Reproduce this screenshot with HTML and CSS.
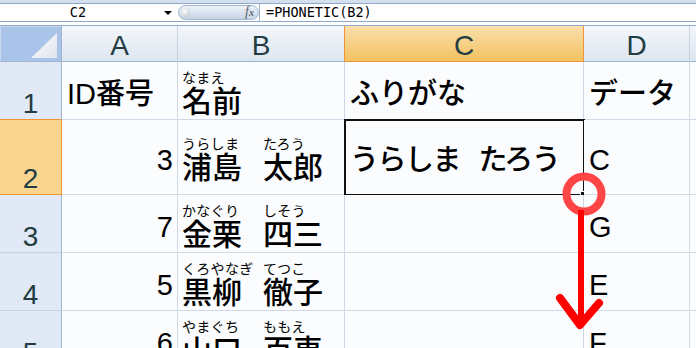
FILE: index.html
```html
<!DOCTYPE html>
<html lang="ja">
<head>
  <meta charset="UTF-8" />
  <title>PHONETIC</title>
  <link rel="stylesheet" href="styles.css">
</head>
<body>
  <div class="ribbon"></div>
  <div class="fbar">
    <div class="namebox"><span class="ref">C2</span><span class="drop"></span></div>
    <div class="fxpill"><span class="knob"></span><span class="fx"><i>f</i><small>x</small></span></div>
    <div class="formula">=PHONETIC(B2)</div>
  </div>
  <div class="gap"></div>

  <div class="sheet">
    <div class="corner"></div>
    <div class="ch">A</div>
    <div class="ch pre">B</div>
    <div class="ch on">C</div>
    <div class="ch">D</div>
    <div class="ch"></div>

    <div class="rh pre">1</div>
    <div class="c">ID番号</div>
    <div class="c name">
      <span class="word"><span class="kana">なまえ</span><span class="kanji">名前</span></span>
    </div>
    <div class="c">ふりがな</div>
    <div class="c">データ</div>
    <div class="c"></div>

    <div class="rh on">2</div>
    <div class="c num r2">3</div>
    <div class="c name r2">
      <span class="word"><span class="kana">うらしま</span><span class="kanji">浦島</span></span>
      <span class="word"><span class="kana">たろう</span><span class="kanji">太郎</span></span>
    </div>
    <div class="c r2 active"><span class="yomi">うらしま たろう</span><span class="sel"></span><span class="handle"></span></div>
    <div class="c r2">C</div>
    <div class="c"></div>

    <div class="rh">3</div>
    <div class="c num">7</div>
    <div class="c name">
      <span class="word"><span class="kana">かなぐり</span><span class="kanji">金栗</span></span>
      <span class="word"><span class="kana">しそう</span><span class="kanji">四三</span></span>
    </div>
    <div class="c"></div>
    <div class="c">G</div>
    <div class="c"></div>

    <div class="rh">4</div>
    <div class="c num">5</div>
    <div class="c name">
      <span class="word"><span class="kana">くろやなぎ</span><span class="kanji">黒柳</span></span>
      <span class="word"><span class="kana">てつこ</span><span class="kanji">徹子</span></span>
    </div>
    <div class="c"></div>
    <div class="c">E</div>
    <div class="c"></div>

    <div class="rh">5</div>
    <div class="c num">6</div>
    <div class="c name">
      <span class="word"><span class="kana">やまぐち</span><span class="kanji">山口</span></span>
      <span class="word"><span class="kana">ももえ</span><span class="kanji">百恵</span></span>
    </div>
    <div class="c"></div>
    <div class="c">F</div>
    <div class="c"></div>
  </div>

  <svg class="marks" width="696" height="348" viewBox="0 0 696 348">
    <circle cx="584" cy="194" r="17.5" fill="none" stroke="#ff4646" stroke-width="8" />
    <path d="M581 210 V324" stroke="#ff0000" stroke-width="6" />
    <path d="M560 298 L580 325 L599 303" fill="none" stroke="#ff0000" stroke-width="8" stroke-linecap="round" stroke-linejoin="round" />
  </svg>
</body>
</html>
```

FILE: styles.css
```css
body {
  margin: 0;
  width: 696px;
  height: 348px;
  overflow: hidden;
  position: relative;
  background: #fff;
  font-family: "Liberation Sans", "Noto Sans CJK JP", sans-serif;
}
.ribbon {
  height: 3px;
  background: #d3dfef;
  border-bottom: 1px solid #8ea9c9;
}
.fbar {
  display: flex;
  height: 17px;
  border-bottom: 1px solid #8ea9c9;
  background: #fff;
  font-family: "DejaVu Sans Mono", monospace;
  font-size: 13.5px;
  line-height: 17px;
}
.namebox {
  width: 178px;
  display: flex;
  align-items: center;
}
.ref {
  width: 156px;
  text-align: center;
}
.drop {
  margin-left: 8px;
  width: 0;
  height: 0;
  border-left: 4px solid transparent;
  border-right: 4px solid transparent;
  border-top: 4px solid #000;
}
.fxpill {
  width: 73px;
  margin: 1px 0;
  border: 1px solid #a3b7d0;
  border-radius: 8px;
  background: linear-gradient(#eef3f9, #c6d4e6);
  display: flex;
  align-items: center;
  justify-content: space-between;
  padding: 0 4px 0 2px;
}
.knob {
  width: 9px;
  height: 9px;
  border-radius: 50%;
  background: radial-gradient(circle at 40% 35%, #fff, #b3bfcc);
}
.fx {
  font-family: "Liberation Serif", serif;
  color: #5f6670;
  font-size: 14px;
  line-height: 14px;
}
.fx small {
  font-size: 10px;
  font-style: italic;
  font-weight: bold;
}
.formula {
  flex: 1;
  border-left: 1px solid #9fb3cb;
  padding-left: 6px;
}
.gap {
  height: 3px;
  border-bottom: 1px solid #8ea9c9;
}

.sheet {
  display: grid;
  grid-template-columns: 62px 116px 167px 239px 106px 1fr;
  grid-template-rows: 36px 58px 75px 58px 58px 58px;
}
.sheet > div {
  box-sizing: border-box;
}
.corner {
  position: relative;
  background: #aac4e9;
  border-right: 1px solid #9eb6ce;
  border-bottom: 1px solid #9eb6ce;
  box-shadow: inset 1px 1px 0 #c9d8ee;
}
.corner::after {
  content: "";
  position: absolute;
  right: 4px;
  bottom: 3px;
  width: 26px;
  height: 25px;
  clip-path: polygon(100% 0, 100% 100%, 0 100%);
  background: linear-gradient(135deg, #ffffff, #dfe4ea);
}
.ch, .rh {
  display: flex;
  justify-content: center;
  align-items: flex-end;
  font-size: 28px;
  line-height: 1;
  color: #223d42;
}
.ch {
  background: linear-gradient(#f4f7fb, #dce5f0);
  border-right: 1px solid #c6d3e3;
  border-bottom: 1px solid #9eb6ce;
  padding-bottom: 1px;
}
.ch.pre {
  border-right-color: #f29536;
}
.ch.on {
  background: linear-gradient(#fae0ad, #f2c15f);
  border-right-color: #f29536;
  border-bottom-color: #f29536;
}
.rh {
  background: #e0e9f5;
  border-right: 1px solid #9eb6ce;
  border-bottom: 1px solid #c2d1e3;
  padding-bottom: 1px;
}
.rh.pre {
  border-bottom-color: #f29536;
}
.rh.on {
  background: #f9d590;
  border-right-color: #f29536;
  border-bottom-color: #f29536;
}

.c {
  position: relative;
  display: flex;
  align-items: flex-end;
  padding: 0 4px 10px 5px;
  background: #fbfcfe;
  border-right: 1px solid #d0d7e5;
  border-bottom: 1px solid #d0d7e5;
  font-size: 29px;
  font-weight: 500;
  line-height: 1;
  color: #000;
  white-space: nowrap;
}
.c.r2 {
  padding-bottom: 19px;
}
.c.num {
  justify-content: flex-end;
}
.c.name {
  padding: 0 0 1px 4px;
}
.c.name.r2 {
  padding-bottom: 10px;
}
.yomi {
  letter-spacing: -1.5px;
  word-spacing: 12px;
}
.word {
  display: flex;
  flex-direction: column;
  width: 83px;
}
.kana {
  font-size: 14px;
  font-weight: 400;
  line-height: 16px;
  letter-spacing: 0.3px;
}
.kanji {
  font-size: 30px;
  line-height: 32px;
}

.sel {
  position: absolute;
  left: -1px;
  top: -1px;
  right: -2px;
  bottom: -2px;
  border: 2px solid #111;
}
.handle {
  position: absolute;
  right: -4px;
  bottom: -4px;
  width: 5px;
  height: 5px;
  background: #111;
  border: 1px solid #fff;
}

.marks {
  position: absolute;
  left: 0;
  top: 0;
  pointer-events: none;
}
```
